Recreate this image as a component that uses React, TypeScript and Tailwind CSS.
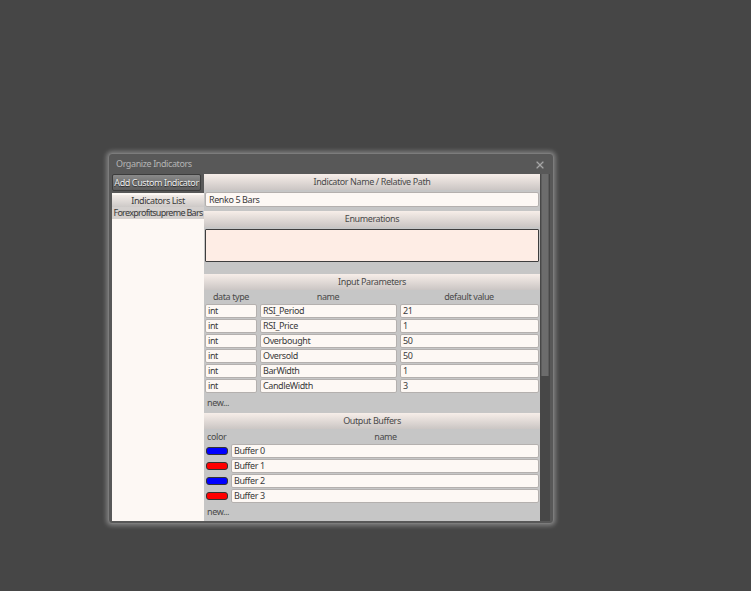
import React from 'react'

const font = { fontFamily: '"Noto Sans", "Open Sans", sans-serif' }

function Header({ children }: { children: React.ReactNode }) {
  return (
    <div className="flex h-[16px] shrink-0 items-center justify-center bg-gradient-to-b from-[#f7eee9] to-[#cbc6c4] text-[9px] text-[#4a4a4a]">
      {children}
    </div>
  )
}

function Field({ value, className = '' }: { value: string; className?: string }) {
  return (
    <div
      className={`flex h-[14px] items-center rounded-[2px] border border-[#b4b0ae] bg-[#fdf8f4] px-[2px] text-[9px] text-[#3a3a3a] ${className}`}
    >
      {value}
    </div>
  )
}

const params = [
  ['int', 'RSI_Period', '21'],
  ['int', 'RSI_Price', '1'],
  ['int', 'Overbought', '50'],
  ['int', 'Oversold', '50'],
  ['int', 'BarWidth', '1'],
  ['int', 'CandleWidth', '3'],
]

const buffers = [
  ['#0000ff', 'Buffer 0'],
  ['#ff0000', 'Buffer 1'],
  ['#0000ff', 'Buffer 2'],
  ['#ff0000', 'Buffer 3'],
]

export default function App() {
  return (
    <div
      className="h-[591px] w-[751px] whitespace-nowrap bg-[#464646] pl-[108px] pt-[153px] tracking-[-0.4px]"
      style={font}
    >
      {/* ── Dialog ─────────────────────────────────────────── */}
      <div className="flex h-[371px] w-[446px] flex-col rounded-[4px] border border-[#7c7c7c] bg-[#585858] shadow-[0_0_4px_2px_rgba(190,190,190,0.45)]">
        {/* title bar */}
        <div className="flex h-[20px] shrink-0 items-center justify-between pl-[7px] pr-[9px]">
          <span className="text-[9px] text-[#b4b4b4]">Organize Indicators</span>
          <svg width="8" height="8" viewBox="0 0 8 8" className="mt-[1px]">
            <path d="M1.2 1.2 L6.8 6.8 M6.8 1.2 L1.2 6.8" stroke="#7e7e7e" strokeWidth="2.2" strokeLinecap="round" />
            <path d="M1.2 1.2 L6.8 6.8 M6.8 1.2 L1.2 6.8" stroke="#b0b0b0" strokeWidth="0.8" strokeLinecap="round" />
          </svg>
        </div>

        <div className="flex min-h-0 flex-1 overflow-hidden pb-[2px] pl-[3px]">
          {/* ── Left column ─────────────────────────────── */}
          <div className="flex w-[92px] shrink-0 flex-col">
            <div className="flex h-[17px] w-[89px] shrink-0 items-center justify-center rounded-[2px] border border-[#3c3c3c] bg-gradient-to-b from-[#8a8a8a] to-[#5c5c5c] text-[9px] text-[#ececec] [text-shadow:0_1px_1px_#222]">
              Add Custom Indicator
            </div>
            <div className="mt-[2px] flex flex-1 flex-col bg-[#fdf8f4]">
              <div className="mt-[2px] flex h-[12px] items-center justify-center bg-gradient-to-b from-[#f3ece8] to-[#cdc9c7] text-[9px] text-[#3a3a3a]">
                Indicators List
              </div>
              <div className="flex h-[12px] items-center justify-center bg-[#d4d0ce] text-[9px] tracking-[-0.7px] text-[#3a3a3a]">
                Forexprofitsupreme Bars
              </div>
            </div>
          </div>

          {/* ── Right panel ─────────────────────────────── */}
          <div className="flex min-h-0 w-[336px] shrink-0 flex-col overflow-hidden bg-[#c6c6c6]">
            <Header>Indicator Name / Relative Path</Header>
            <div className="shrink-0 px-[1px] pt-[2px]">
              <Field value="Renko 5 Bars" className="h-[15px] px-[3px]" />
            </div>

            <div className="mt-[4px] shrink-0">
              <Header>Enumerations</Header>
            </div>
            <div className="shrink-0 px-[1px] pt-[2px]">
              <div className="h-[33px] rounded-[1px] border border-[#3e3e3e] bg-[#feede5]" />
            </div>

            <div className="mt-[12px] shrink-0">
              <Header>Input Parameters</Header>
            </div>
            <div className="flex h-[14px] shrink-0 items-center text-[9px] text-[#4a4a4a]">
              <span className="w-[54px] text-center">data type</span>
              <span className="w-[140px] text-center">name</span>
              <span className="flex-1 text-center">default value</span>
            </div>
            <div className="flex shrink-0 flex-col gap-[1px] px-[1px]">
              {params.map(([t, n, v]) => (
                <div key={n} className="flex h-[14px] gap-[3px]">
                  <Field value={t} className="w-[52px]" />
                  <Field value={n} className="w-[137px]" />
                  <Field value={v} className="flex-1" />
                </div>
              ))}
            </div>
            <div className="flex h-[20px] shrink-0 items-center pl-[3px] text-[9px] text-[#4a4a4a]">new...</div>

            <Header>Output Buffers</Header>
            <div className="flex h-[15px] shrink-0 items-center text-[9px] text-[#4a4a4a]">
              <span className="w-[27px] pl-[3px]">color</span>
              <span className="flex-1 text-center">name</span>
            </div>
            <div className="flex shrink-0 flex-col gap-[1px] px-[1px]">
              {buffers.map(([c, n]) => (
                <div key={n} className="flex h-[14px] items-center gap-[3px]">
                  <span
                    className="ml-[1px] h-[8px] w-[22px] rounded-[3px] border border-[#333]"
                    style={{ backgroundColor: c }}
                  />
                  <Field value={n} className="flex-1" />
                </div>
              ))}
            </div>
            <div className="flex h-[18px] shrink-0 items-center pl-[3px] text-[9px] text-[#4a4a4a]">new...</div>
          </div>

          {/* ── Scrollbar ───────────────────────────────── */}
          <div className="flex w-[10px] shrink-0 flex-col bg-[#474747]">
            <div className="mx-[1px] h-[202px] border-x border-[#5c5c5c] bg-[#6c6c6c]" />
          </div>
        </div>
      </div>
    </div>
  )
}
